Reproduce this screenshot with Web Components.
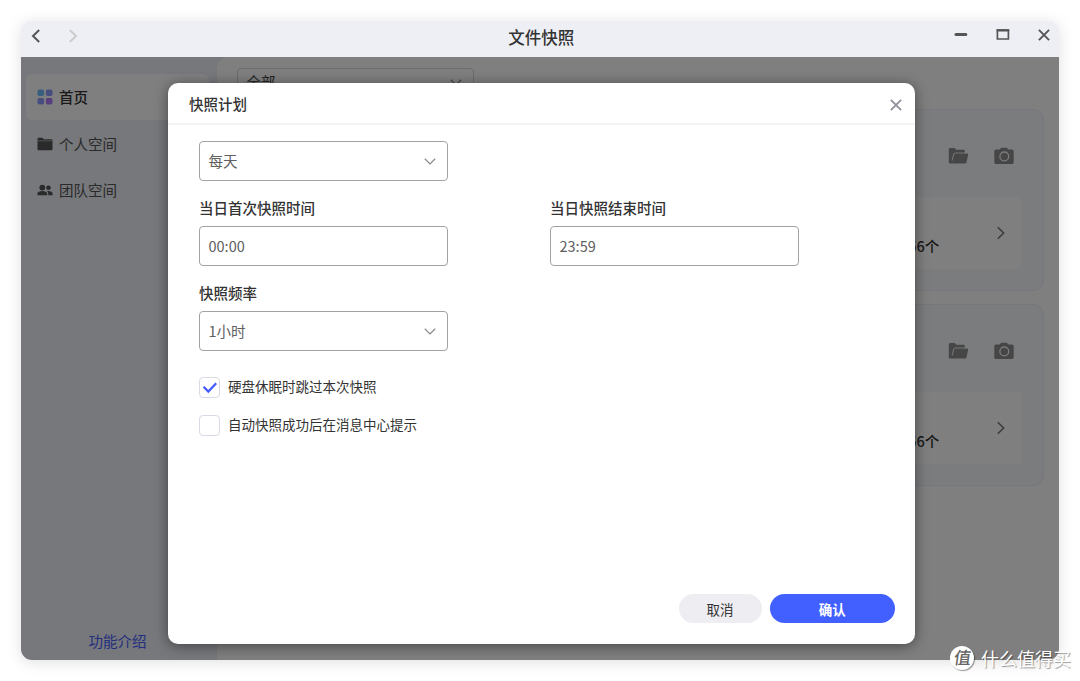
<!DOCTYPE html>
<html lang="zh-CN">
<head>
<meta charset="utf-8">
<title>文件快照</title>
<style>
	body{
		margin:0;
		width:1080px;
		height:681px;
		overflow:hidden;
		background:#fff;
		color:#333;
		font-family:"Noto Sans CJK SC", sans-serif;
		font-size:14.5px;
	}
</style>
</head>
<body>
<snapshot-app></snapshot-app>

<script>
// small helper: builds the template once and clones it for each instance
function define(name, html, setup) {
	const template = document.createElement("template");
	template.innerHTML = html;
	customElements.define(name, class extends HTMLElement {
		constructor() {
			super();
			this.attachShadow({ mode: "open" });
			this.shadowRoot.appendChild(template.content.cloneNode(true));
		}
		connectedCallback() {
			if (setup) setup(this, this.shadowRoot);
		}
	});
}

// every icon is [viewBox width, viewBox height, markup], drawn at its natural size
const icons = {
	back: [10, 14, '<path d="M8.2 1 2 7l6.2 6" fill="none" stroke="currentColor" stroke-width="2"/>'],
	next: [10, 14, '<path d="M1.8 1 8 7l-6.2 6" fill="none" stroke="currentColor" stroke-width="2"/>'],
	arrow: [10, 14, '<path d="M1.8 1.2 7.6 7l-5.8 5.8" fill="none" stroke="currentColor" stroke-width="1.6"/>'],
	down: [12, 8, '<path d="M.8 1.8 6 6.9l5.2-5.1" fill="none" stroke="currentColor" stroke-width="1.2"/>'],
	minimize: [14, 14, '<path d="M2 6.5h9.8" stroke="currentColor" stroke-width="3" stroke-linecap="round"/>'],
	maximize: [14, 14, '<path d="M1.4 2.2h11v8.800h-11z" fill="none" stroke="currentColor" stroke-width="1.7"/><path d="M.6 2.4h12.6" stroke="currentColor" stroke-width="2.2"/>'],
	close: [12, 12, '<path d="m.9.9 10.2 10.2M11.1.9.9 11.1" fill="none" stroke="currentColor" stroke-width="1.9"/>'],
	home: [16, 16, '<rect x=".5" y=".5" width="6.6" height="6.6" rx="1.8" fill="#6fbcff"/><rect x="8.9" y=".5" width="6.6" height="6.6" rx="1.8" fill="#8f9dff"/><rect x=".5" y="8.9" width="6.6" height="6.6" rx="1.8" fill="#8f9dff"/><rect x="8.9" y="8.9" width="6.6" height="6.6" rx="1.8" fill="#b07cfa"/>'],
	folder: [16, 14, '<path d="M.5 2.1C.5 1.2 1 .8 1.7.8h3.7l1.4 1.5h7.4c.8 0 1.3.5 1.3 1.3v8.3c0 .8-.5 1.3-1.3 1.3H1.8c-.8 0-1.3-.5-1.3-1.3z" fill="currentColor"/><path d="M.5 3.8h15" stroke="#eff0f5" stroke-width=".5"/>'],
	team: [16, 12, '<g fill="currentColor"><circle cx="5.3" cy="3.6" r="2.9"/><circle cx="11.5" cy="3.8" r="2.3"/><path d="M.4 11.3V9.7c0-1.8 2.2-2.7 4.9-2.7s4.9.9 4.9 2.7v1.6zM11.2 11.3V9.8c0-1.2-.6-2-1.4-2.7 3.2-.5 5.800.5 5.800 2.5v1.7z"/></g>'],
	open: [20, 18, '<path d="M.8 15.2V2.500C.8 1.600 1.300 1 2.200 1h4.400l1.700 1.800h7.200c.8 0 1.300.5 1.300 1.300v2.400h2.400c.8 0 1.200.5 1 1.200l-1.700 7.600c-.2.8-.7 1.200-1.500 1.200H2.200c-.9 0-1.400-.5-1.400-1.300z" fill="currentColor"/><path d="M4.200 13 5.800 7.200c.2-.8.7-1.200 1.500-1.200h9.800" fill="none" stroke="#f6f8fd" stroke-width="1.100" stroke-linecap="round" stroke-opacity=".85"/>'],
	camera: [20, 18, '<path d="M5.800 2.500 7 .8h6l1.200 1.700h3.600c1.200 0 1.900.7 1.900 1.800v10.900c0 1.100-.7 1.800-1.900 1.800H2.200C1 17 .3 16.300.3 15.200V4.300c0-1.100.7-1.800 1.900-1.800z" fill="currentColor"/><circle cx="10.300" cy="9.400" r="4.400" fill="none" stroke="#f6f8fd" stroke-width="1.300"/>'],
	check: [16, 14, '<path d="m1.600 5.800 4.700 4.700 7.900-8.200" fill="none" stroke="currentColor" stroke-width="2.300"/>']
};

define("app-icon", `
<style>
	:host{display:block;flex:none;line-height:0}
	svg{display:block}
</style>
<svg></svg>
`, (el, root) => {
	const [w, h, markup] = icons[el.getAttribute("name")];
	const svg = root.querySelector("svg");
	svg.setAttribute("viewBox", `0 0 ${w} ${h}`);
	svg.setAttribute("width", w);
	svg.setAttribute("height", h);
	svg.innerHTML = markup;
});

define("title-bar", `
<style>
	:host{
		display:grid;
		grid-template-columns:1fr auto 1fr;
		align-items:center;
		height:36px;
		box-sizing:border-box;
		padding:0 9px;
		background:#eeeff5;
		color:#555;
	}
	.nav{display:flex;gap:27px;padding:0 0 6px 1px}
	.nav app-icon:last-child{color:#ccc}
	h1{margin:0;padding:0 0 4px 2px;color:#333;font-size:16.5px;line-height:24px;font-weight:500}
	.controls{display:flex;justify-content:flex-end;align-items:center;gap:28px;padding:0 0 8px}
	.controls app-icon:last-child{margin-left:.5px}
</style>
<div class="nav"><app-icon name="back"></app-icon><app-icon name="next"></app-icon></div>
<h1>文件快照</h1>
<div class="controls">
	<app-icon name="minimize"></app-icon>
	<app-icon name="maximize"></app-icon>
	<app-icon name="close"></app-icon>
</div>
`);

define("nav-item", `
<style>
	:host{
		display:flex;
		align-items:center;
		gap:6px;
		height:46px;
		padding:0 11px;
		border-radius:6px;
		color:#555;
		line-height:22px;
	}
	:host([active]){background:#fff;color:#333;font-weight:500}
</style>
<span><slot></slot></span>
`, (el, root) => {
	const icon = document.createElement("app-icon");
	icon.setAttribute("name", el.getAttribute("icon"));
	root.querySelector("span").before(icon);
});

define("side-bar", `
<style>
	:host{
		display:flex;
		flex-direction:column;
		width:196px;
		box-sizing:border-box;
		padding:17px 8px 8px 5px;
		flex:none;
	}
	nav{display:flex;flex-direction:column;gap:.6px}
	.intro{margin-top:auto;text-align:center;color:#465cff;line-height:22px}
</style>
<nav>
	<slot></slot>
</nav>
<div class="intro">功能介绍</div>
`);

// bordered box with a value; the arrow is shown with the "select" attribute
define("form-field", `
<style>
	:host{
		display:flex;
		align-items:center;
		justify-content:space-between;
		box-sizing:border-box;
		width:249px;
		height:40px;
		padding:0 11px 0 8.5px;
		border:1px solid #a2a2a2;
		border-radius:4px;
		color:#606060;
		line-height:22px;
	}
	app-icon{display:none;color:#888}
	:host([select]) app-icon{display:block}
</style>
<span><slot></slot></span>
<app-icon name="down"></app-icon>
`);

define("snapshot-card", `
<style>
	:host{
		display:flex;
		flex-direction:column;
		box-sizing:border-box;
		height:182px;
		padding:37px 21px 21px;
		border:1px solid #eceef5;
		border-radius:11px;
		background:#f6f8fd;
	}
	.actions{display:flex;justify-content:flex-end;gap:26px;padding-right:8px;color:#8c8c8c}
	.row{
		display:grid;
		grid-template-columns:1fr 60px;
		align-items:center;
		height:72px;
		margin-top:auto;
		padding-right:23px;
		border-radius:5px;
		background:#fff;
		color:#333;
		font-weight:500;
	}
	.count{text-align:right;line-height:22px;padding:26px 0 0}
	.row app-icon{justify-self:end;color:#777;margin-right:-7px}
</style>
<div class="actions"><app-icon name="open"></app-icon><app-icon name="camera"></app-icon></div>
<div class="row">
	<div class="count"><slot></slot></div>
	<app-icon name="arrow"></app-icon>
</div>
`);

define("check-row", `
<style>
	:host{display:flex;align-items:center;gap:8px;font-size:13.5px;line-height:21px}
	.box{
		display:grid;
		place-items:center;
		box-sizing:border-box;
		width:21px;
		height:21px;
		border:1px solid #d9dae5;
		border-radius:4px;
		color:#465cff;
	}
	span{margin-top:-2px}
	app-icon{display:none}
	:host([checked]) app-icon{display:block}
</style>
<div class="box"><app-icon name="check"></app-icon></div>
<span><slot></slot></span>
`);

define("pill-button", `
<style>
	:host{
		display:flex;
		align-items:center;
		justify-content:center;
		width:83px;
		height:29px;
		border-radius:15px;
		background:#ededf2;
		color:#333;
		font-size:13.5px;
		line-height:20px;
	}
	:host([primary]){width:124.5px;background:#425fff;color:#fff;font-weight:700}
</style>
<span><slot></slot></span>
`);

define("plan-dialog", `
<style>
	:host{
		display:flex;
		flex-direction:column;
		width:747px;
		height:560.5px;
		border-radius:10px;
		background:#fff;
		box-shadow:0 2px 14px rgba(0,0,0,.45);
	}
	header{
		display:flex;
		justify-content:space-between;
		align-items:center;
		height:39px;
		padding:1px 13px 0 21px;
		border-bottom:2px solid #f3f3f4;
	}
	h2{margin:0;font-size:14.5px;font-weight:500;line-height:22px}
	header app-icon{color:#90929c;padding-top:2px}
	.form{
		display:grid;
		grid-template-columns:249px 249px;
		column-gap:102px;
		padding:16px 31px 0;
	}
	label{font-weight:500;line-height:22px;padding:16px 0 7px}
	.wide{grid-column:1 / 3}
	.checks{display:flex;flex-direction:column;gap:17px;padding:26px 31px 0}
	footer{display:flex;justify-content:flex-end;gap:8.5px;margin-top:auto;padding:0 20.5px 20.5px}
</style>
<header><h2>快照计划</h2><app-icon name="close"></app-icon></header>
<div class="form">
	<form-field class="wide" select>每天</form-field>
	<label>当日首次快照时间</label>
	<label>当日快照结束时间</label>
	<form-field>00:00</form-field>
	<form-field>23:59</form-field>
	<label class="wide">快照频率</label>
	<form-field class="wide" select>1小时</form-field>
</div>
<div class="checks">
	<check-row checked>硬盘休眠时跳过本次快照</check-row>
	<check-row>自动快照成功后在消息中心提示</check-row>
</div>
<footer>
	<pill-button>取消</pill-button>
	<pill-button primary>确认</pill-button>
</footer>
`);

define("site-mark", `
<style>
	:host{
		display:flex;
		align-items:center;
		gap:7px;
		color:#fff;
		font-size:18px;
		line-height:26px;
		white-space:nowrap;
		text-shadow:1px 1px 1px rgba(0,0,0,.4);
	}
	.logo{
		display:grid;
		place-items:center;
		width:24px;
		height:24px;
		border-radius:50%;
		background:#fff;
		box-shadow:1px 1px 1px rgba(0,0,0,.4);
		color:#666;
		font-size:17px;
		font-weight:500;
		line-height:24px;
		text-shadow:none;
	}
	.logo span{transform:skewX(-8deg) translateY(-1px)}
</style>
<div class="logo"><span>值</span></div>
<span>什么值得买</span>
`);

define("snapshot-app", `
<style>
	:host{display:block;position:relative;box-sizing:border-box;width:1080px;height:681px;padding:21px}
	.window{
		width:1038.3px;
		height:639px;
		border-radius:11px;
		overflow:hidden;
		background:#eeeff5;
	}
	.shadow{border-radius:11px;width:1038.3px;box-shadow:0 2px 16px rgba(0,0,0,.13)}
	.body{position:relative;display:flex;height:603px;background:#edf0f7}
	main{
		display:flex;
		flex-direction:column;
		flex:1;
		padding:11px 15px 0 20px;
		border-radius:12px 0 0 0;
		background:#fff;
	}
	main form-field{width:237px;height:28px;border-color:#d8d8d8;margin-bottom:13px;color:#444}
	snapshot-card + snapshot-card{margin-top:13px}
	/* dimmed layer over the page, the dialog sits on it */
	.mask{
		position:absolute;
		inset:0;
		display:flex;
		align-items:flex-start;
		box-sizing:border-box;
		padding:26px 0 0 147px;
		background:rgba(0,0,0,.5);
	}
	site-mark{position:absolute;left:950px;top:645px}
</style>
<div class="shadow">
	<div class="window">
		<title-bar></title-bar>
		<div class="body">
			<side-bar>
				<nav-item icon="home" active>首页</nav-item>
				<nav-item icon="folder">个人空间</nav-item>
				<nav-item icon="team">团队空间</nav-item>
			</side-bar>
			<main>
				<form-field select>全部</form-field>
				<snapshot-card>56个</snapshot-card>
				<snapshot-card>56个</snapshot-card>
			</main>
			<div class="mask"><plan-dialog></plan-dialog></div>
		</div>
	</div>
</div>
<site-mark></site-mark>
`);
</script>
</body>
</html>
